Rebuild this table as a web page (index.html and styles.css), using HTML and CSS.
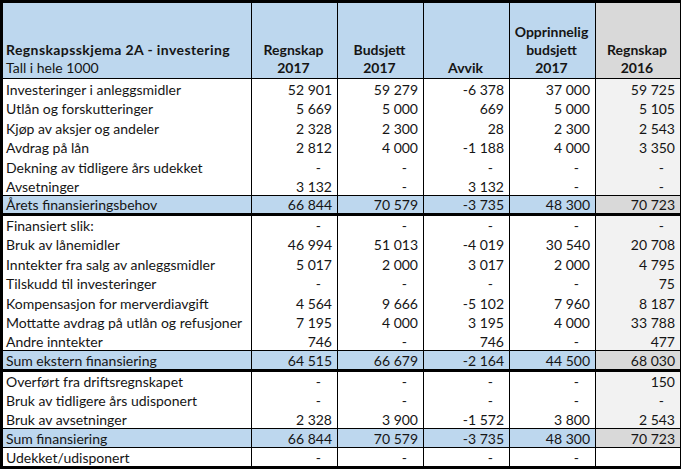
FILE: index.html
```html
<!DOCTYPE html>
<html lang="no">
<head>
<meta charset="utf-8">
<title>Regnskapsskjema 2A - investering</title>
<link rel="stylesheet" href="styles.css">
</head>
<body>
<table class="sheet">
  <colgroup>
    <col class="c-label"><col class="c-num"><col class="c-num"><col class="c-num"><col class="c-num"><col class="c-last">
  </colgroup>
  <thead>
    <tr class="head">
      <th class="label"><b class="title">Regnskapsskjema 2A - investering</b><br>Tall i hele 1000</th>
      <th>Regnskap<br>2017</th>
      <th>Budsjett<br>2017</th>
      <th>Avvik</th>
      <th>Opprinnelig<br>budsjett<br>2017</th>
      <th class="prev">Regnskap<br>2016</th>
    </tr>
  </thead>
  <tbody>
    <tr><td class="label">Investeringer i anleggsmidler</td><td>52 901</td><td>59 279</td><td>-6 378</td><td>37 000</td><td class="prev">59 725</td></tr>
    <tr><td class="label">Utlån og forskutteringer</td><td>5 669</td><td>5 000</td><td>669</td><td>5 000</td><td class="prev">5 105</td></tr>
    <tr><td class="label">Kjøp av aksjer og andeler</td><td>2 328</td><td>2 300</td><td>28</td><td>2 300</td><td class="prev">2 543</td></tr>
    <tr><td class="label">Avdrag på lån</td><td>2 812</td><td>4 000</td><td>-1 188</td><td>4 000</td><td class="prev">3 350</td></tr>
    <tr><td class="label">Dekning av tidligere års udekket</td><td class="dash">-</td><td class="dash">-</td><td class="dash">-</td><td class="dash">-</td><td class="prev dash">-</td></tr>
    <tr><td class="label">Avsetninger</td><td>3 132</td><td class="dash">-</td><td>3 132</td><td class="dash">-</td><td class="prev dash">-</td></tr>
    <tr class="total thick"><td class="label">Årets finansieringsbehov</td><td>66 844</td><td>70 579</td><td>-3 735</td><td>48 300</td><td class="prev">70 723</td></tr>
    <tr><td class="label">Finansiert slik:</td><td class="dash">-</td><td class="dash">-</td><td class="dash">-</td><td class="dash">-</td><td class="prev dash">-</td></tr>
    <tr><td class="label">Bruk av lånemidler</td><td>46 994</td><td>51 013</td><td>-4 019</td><td>30 540</td><td class="prev">20 708</td></tr>
    <tr><td class="label">Inntekter fra salg av anleggsmidler</td><td>5 017</td><td>2 000</td><td>3 017</td><td>2 000</td><td class="prev">4 795</td></tr>
    <tr><td class="label">Tilskudd til investeringer</td><td class="dash">-</td><td class="dash">-</td><td class="dash">-</td><td class="dash">-</td><td class="prev">75</td></tr>
    <tr><td class="label">Kompensasjon for merverdiavgift</td><td>4 564</td><td>9 666</td><td>-5 102</td><td>7 960</td><td class="prev">8 187</td></tr>
    <tr><td class="label">Mottatte avdrag på utlån og refusjoner</td><td>7 195</td><td>4 000</td><td>3 195</td><td>4 000</td><td class="prev">33 788</td></tr>
    <tr><td class="label">Andre inntekter</td><td>746</td><td class="dash">-</td><td>746</td><td class="dash">-</td><td class="prev">477</td></tr>
    <tr class="total thick"><td class="label">Sum ekstern finansiering</td><td>64 515</td><td>66 679</td><td>-2 164</td><td>44 500</td><td class="prev">68 030</td></tr>
    <tr><td class="label">Overført fra driftsregnskapet</td><td class="dash">-</td><td class="dash">-</td><td class="dash">-</td><td class="dash">-</td><td class="prev">150</td></tr>
    <tr><td class="label">Bruk av tidligere års udisponert</td><td class="dash">-</td><td class="dash">-</td><td class="dash">-</td><td class="dash">-</td><td class="prev dash">-</td></tr>
    <tr><td class="label">Bruk av avsetninger</td><td>2 328</td><td>3 900</td><td>-1 572</td><td>3 800</td><td class="prev">2 543</td></tr>
    <tr class="total"><td class="label">Sum finansiering</td><td>66 844</td><td>70 579</td><td>-3 735</td><td>48 300</td><td class="prev">70 723</td></tr>
    <tr class="last"><td class="label">Udekket/udisponert</td><td class="dash">-</td><td class="dash">-</td><td class="dash">-</td><td class="dash">-</td><td class="blank"></td></tr>
  </tbody>
</table>
</body>
</html>
```
FILE: styles.css
```css
html, body {
  margin: 0;
  padding: 0;
  background: #ffffff;
}

.sheet {
  border-collapse: collapse;
  width: 681px;
  table-layout: fixed;
  font-family: Lato, "Open Sans", sans-serif;
  font-size: 14px;
  color: #151515;
  border: 3px solid #000;
}

.c-label { width: 250px; }
.c-num { width: 86px; }
.c-last { width: 86px; }

.sheet th,
.sheet td {
  border-left: 1px solid #000;
  border-right: 1px solid #000;
  padding: 0 5px 0 3px;
  white-space: nowrap;
  vertical-align: bottom;
  box-sizing: border-box;
}

.head th {
  background: #bdd7ee;
  height: 77px;
  line-height: 18px;
  font-weight: 700;
  text-align: center;
  padding-bottom: 1px;
  border-bottom: 1px solid #000;
}

.head th.label {
  text-align: left;
  font-weight: 400;
}

.head .title {
  letter-spacing: 0.4px;
}

.head th.prev {
  background: #d9d9d9;
}

tbody td {
  height: 19.45px;
  line-height: 16px;
  padding-top: 0;
  padding-bottom: 1px;
  text-align: right;
}

tbody td.label {
  text-align: left;
}

tbody td.dash {
  padding-right: 16px;
}

tbody td.prev {
  background: #f2f2f2;
}

tbody td.blank {
  background: #fff;
}

tr.total td {
  background: #bdd7ee;
  border-top: 1px solid #000;
  border-bottom: 1px solid #000;
}

tr.total td.prev {
  background: #d9d9d9;
}

tr.total.thick td {
  border-bottom: 3px solid #000;
}
```
